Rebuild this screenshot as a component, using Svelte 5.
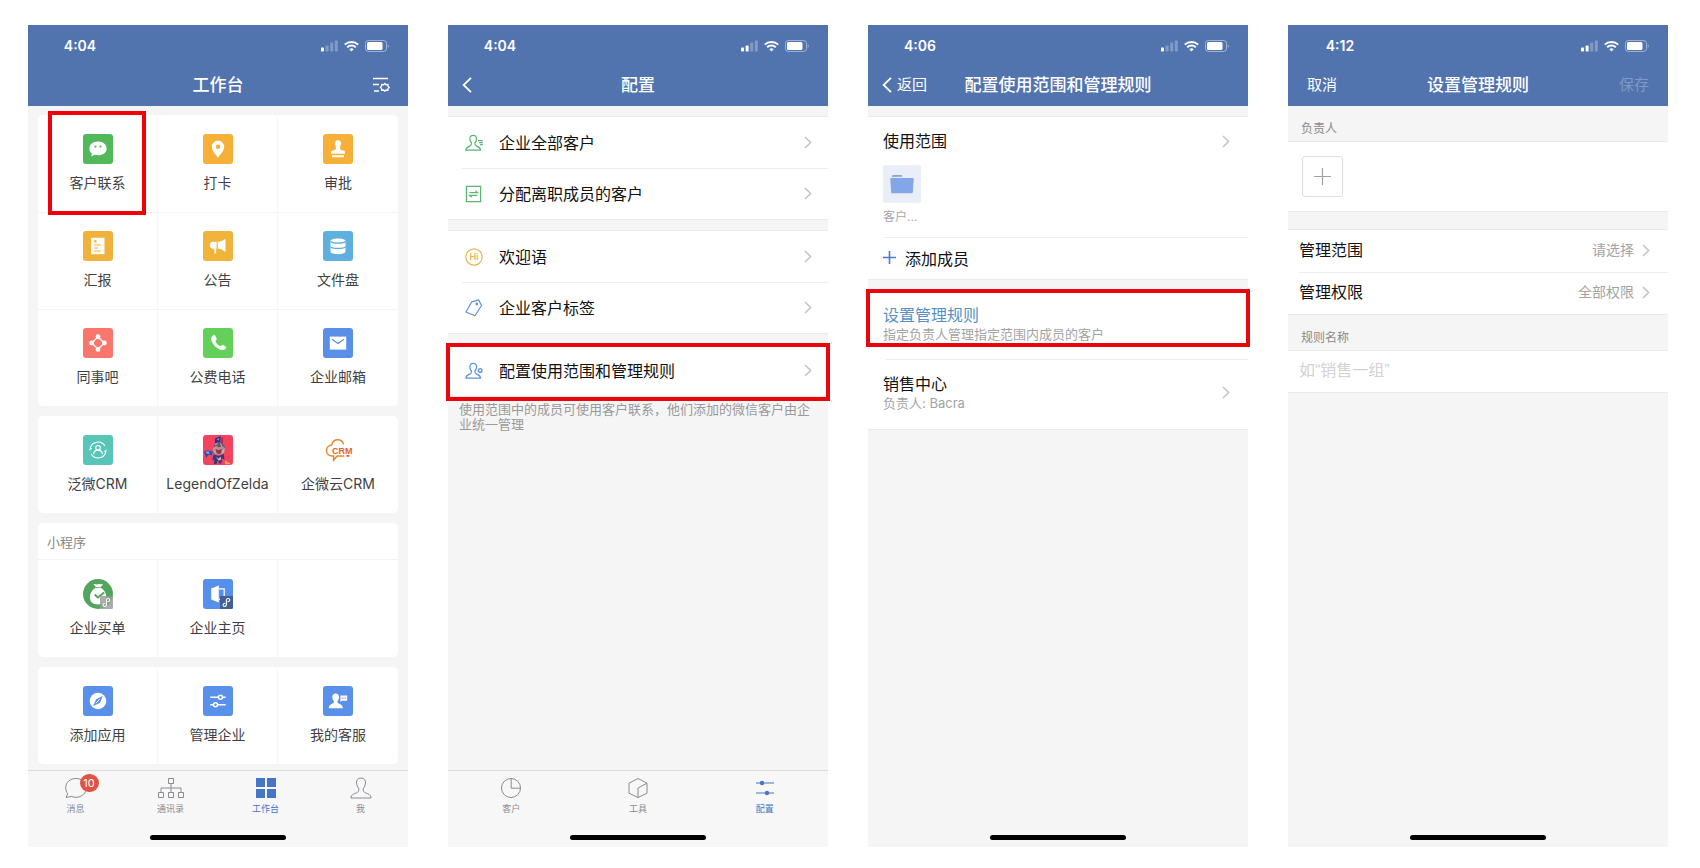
<script lang="ts">
  type App = { icon: string, label: string, marked?: boolean }
  type AppGroup = { title?: string, apps: App[] }
  type Tab = { icon: string, label: string, badge?: number }

  const appGroups: AppGroup[] = [
    {
      apps: [
        { icon: 'contact', label: '客户联系', marked: true },
        { icon: 'pin', label: '打卡' },
        { icon: 'stamp', label: '审批' },
        { icon: 'report', label: '汇报' },
        { icon: 'notice', label: '公告' },
        { icon: 'disk', label: '文件盘' },
        { icon: 'forum', label: '同事吧' },
        { icon: 'phone', label: '公费电话' },
        { icon: 'mail', label: '企业邮箱' }
      ]
    },
    {
      apps: [
        { icon: 'weaver', label: '泛微CRM' },
        { icon: 'zelda', label: 'LegendOfZelda' },
        { icon: 'cloudcrm', label: '企微云CRM' }
      ]
    },
    {
      title: '小程序',
      apps: [
        { icon: 'pay', label: '企业买单' },
        { icon: 'home', label: '企业主页' }
      ]
    },
    {
      apps: [
        { icon: 'compass', label: '添加应用' },
        { icon: 'manage', label: '管理企业' },
        { icon: 'service', label: '我的客服' }
      ]
    }
  ]

  const configGroups: App[][] = [
    [
      { icon: 'all', label: '企业全部客户' },
      { icon: 'assign', label: '分配离职成员的客户' }
    ],
    [
      { icon: 'hi', label: '欢迎语' },
      { icon: 'tag', label: '企业客户标签' }
    ],
    [{ icon: 'scope', label: '配置使用范围和管理规则', marked: true }]
  ]

  const mainTabs: Tab[] = [
    { icon: 'chat', label: '消息', badge: 10 },
    { icon: 'tree', label: '通讯录' },
    { icon: 'grid', label: '工作台' },
    { icon: 'me', label: '我' }
  ]

  const contactTabs: Tab[] = [
    { icon: 'pie', label: '客户' },
    { icon: 'cube', label: '工具' },
    { icon: 'sliders', label: '配置' }
  ]

  let mainTab = $state('工作台')
  let contactTab = $state('配置')
  let ruleName = $state('')
</script>

{#snippet statusBar(time: string, bars: number)}
  <div class="status-bar">
    <time>{time}</time>
    <span class="signals">
      <svg width="17" height="12" viewBox="0 0 17 12" fill="#fff" aria-hidden="true">
        {#each [4, 6, 9, 11] as h, i}
          <rect x={i * 4.6} y={11.5 - h} width="3" height={h} rx="0.8" opacity={i < bars ? 1 : 0.28} />
        {/each}
      </svg>
      <svg width="15" height="12" viewBox="0 0 15 12" fill="none" stroke="#fff" stroke-width="2" aria-hidden="true">
        <path d="M.8 4.6a9.6 9.6 0 0 1 13.4 0M3.2 7.2a6.2 6.2 0 0 1 8.6 0" />
        <path d="M7.5 11.4 5.4 9.3a3 3 0 0 1 4.2 0z" fill="#fff" stroke="none" />
      </svg>
      <svg width="24" height="12" viewBox="0 0 24 12" aria-hidden="true">
        <rect x=".5" y=".5" width="21" height="11" rx="3" fill="none" stroke="#fff" stroke-opacity=".45" />
        <rect x="2" y="2" width="15.5" height="8" rx="1.6" fill="#fff" />
        <path d="M22.8 4.2c1.2.4 1.2 3.2 0 3.6z" fill="#fff" fill-opacity=".5" />
      </svg>
    </span>
  </div>
{/snippet}

{#snippet chevron()}
  <svg class="chevron" width="8" height="13" viewBox="0 0 8 13" fill="none" stroke="#c4c4c8" stroke-width="1.6" aria-hidden="true">
    <path d="M1 1l5.6 5.5L1 12" />
  </svg>
{/snippet}

{#snippet backArrow()}
  <svg width="10" height="16" viewBox="0 0 10 16" fill="none" stroke="#fff" stroke-width="1.8" aria-hidden="true">
    <path d="M9 .8 1.6 8 9 15.2" />
  </svg>
{/snippet}

{#snippet tile(color: string)}
  <rect width="30" height="30" rx="3" fill={color} />
{/snippet}

{#snippet miniMark()}
  <path d="M24.8 22.7c1.3-.2 2-.9 2-1.7 0-.9-.8-1.5-1.700-1.500-1 0-1.700.7-1.700 1.700v4.500c0 1-.8 1.700-1.800 1.700-.9 0-1.600-.6-1.600-1.500 0-.8.7-1.500 1.900-1.700" fill="none" stroke="#fff" stroke-width="1.1" stroke-linecap="round" />
{/snippet}

{#snippet appIcon(name: string)}
  <svg width="30" height="30" viewBox="0 0 30 30" aria-hidden="true">
    {#if name === 'contact'}
      {@render tile('#52b95b')}
      <path d="M15 7.6c4.9 0 8.6 2.900 8.600 6.800s-3.700 6.900-8.600 6.900c-1.200 0-2.400-.2-3.400-.5L8.200 22.400l.7-2.900c-1.600-1.300-2.500-3-2.500-5.100 0-3.900 3.700-6.800 8.600-6.800z" fill="#fff" />
      <circle cx="12.5" cy="12.6" r="1.1" fill="#52b95b" />
      <circle cx="17.5" cy="12.6" r="1.1" fill="#52b95b" />
    {:else if name === 'pin'}
      {@render tile('#f6b037')}
      <path d="M15 6.6a6.2 6.2 0 0 1 6.2 6.2c0 4.200-4.200 8-6.200 11-2-3-6.200-6.800-6.200-11A6.2 6.2 0 0 1 15 6.6z" fill="#fff" />
      <circle cx="15" cy="12.8" r="2.2" fill="#f6b037" />
    {:else if name === 'stamp'}
      {@render tile('#f6b037')}
      <path d="M15 6.2c2.200 0 3.300 1.700 3.100 3.400-.2 1.600-1.200 2.600-1 4.600.1 1.400 1.200 2 3.200 2.200 1.200.1 1.700.7 1.700 1.900v1.400H8v-1.400c0-1.200.5-1.800 1.700-1.900 2-.2 3.100-.8 3.200-2.200.2-2-.8-3-1-4.600-.2-1.700.9-3.400 3.100-3.400zM9 21.300h12v1.900H9z" fill="#fff" />
    {:else if name === 'report'}
      {@render tile('#f1b23b')}
      <path d="M8 6.8h13.500v16.400H8z" fill="#fff" />
      <circle cx="12.3" cy="10.3" r="1.3" fill="#f1b23b" />
      <path d="M11 14h7M11 17h4M11 20h7" stroke="#f1b23b" stroke-width="1.1" />
    {:else if name === 'notice'}
      {@render tile('#f0b43c')}
      <path d="M13.600 10.800v7h-.5v4.800h-1.800v-4.800h-1c-2 0-3.500-1.400-3.500-3.500s1.500-3.500 3.500-3.500zM14.800 10.800h1.500c2.400-.4 4.400-1.700 6.200-3.300v13.600c-1.800-1.600-3.800-2.900-6.200-3.300h-1.500z" fill="#fff" />
    {:else if name === 'disk'}
      {@render tile('#5fb0df')}
      <path d="M7.5 10.2C7.5 6.7 22.5 6.7 22.5 10.2v10.4c0 3.500-15 3.500-15 0z" fill="#fff" />
      <path d="M7.5 10.4c1.200 2.300 13.800 2.300 15 0M7.5 15.7c1.200 2.300 13.800 2.300 15 0" fill="none" stroke="#5fb0df" stroke-width="1.2" />
    {:else if name === 'forum'}
      {@render tile('#f8766c')}
      <path d="M15 8.8 21.2 15 15 21.2 8.8 15z" fill="none" stroke="#fff" stroke-width="1.3" />
      <circle cx="15" cy="8.6" r="2.4" fill="#fff" />
      <circle cx="21.4" cy="15" r="2.4" fill="#fff" />
      <circle cx="15" cy="21.4" r="2.4" fill="#fff" />
      <circle cx="8.6" cy="15" r="2.4" fill="#fff" />
    {:else if name === 'phone'}
      {@render tile('#63d159')}
      <path d="M10.600 7.200c.8-.4 1.500 0 2 1l.9 2c.4.9.2 1.500-.5 2.100-.6.500-.6 1-.2 1.800.9 1.700 2 2.800 3.700 3.700.8.500 1.300.4 1.900-.2.600-.7 1.200-.8 2-.4l1.900 1.100c.9.500 1.100 1.200.6 1.900-1.300 1.900-3.600 2.400-6.100 1.300-4-1.800-6.900-4.700-8.300-8.400-.9-2.400-.2-4.900 2.100-5.900z" fill="#fff" />
    {:else if name === 'mail'}
      {@render tile('#5a8fe8')}
      <path d="M6.8 8.600h16.400v13H6.800z" fill="#fff" />
      <path d="M9 11.200l6 4.300 6-4.300" fill="none" stroke="#5a8fe8" stroke-width="1.2" />
    {:else if name === 'weaver'}
      {@render tile('#57c6b9')}
      <g fill="none" stroke="#fff" stroke-width="1.1">
        <path d="M7.200 13.200a8 8 0 0 1 14.600-2.300M22.800 16.800a8 8 0 0 1-14.600 2.300M7 15.400l.2-2.200 1.800.6M23 14.600l-.2 2.200-1.800-.6" />
        <circle cx="15" cy="12.8" r="2.3" />
        <path d="M10.600 19.300c.2-2.800 2-4.200 4.400-4.200s4.200 1.400 4.400 4.200" />
      </g>
    {:else if name === 'zelda'}
      {@render tile('#f5425f')}
      <path d="M12 3.500 17.800 1l-.6 6.500-5.200.9z" fill="#28308c" />
      <path d="M18 2.500l2.200.5-.4 6-2.600-1z" fill="#b52c58" />
      <path d="M1 16.500l4-1.200 5.500 1.700-1 3.300-4.200-.5-2 3.200z" fill="#3545a4" />
      <path d="M2.500 16.800l3-.7 1.500 2.400-3 .4z" fill="#61a9dc" />
      <circle cx="16" cy="13.8" r="6.2" fill="#b3958f" />
      <path d="M10 13l1.500-4 3-2 4.500.6 2.700 3.400.3 2.500-2.800-2.700-3.200 1.700-3-1.700z" fill="#6c527b" />
      <path d="M12 9.500l2.500-.8M17 8.700l2.200 1.800M10.700 15.500l1.800 2.200M20.800 15l-1.300 2.800" stroke="#dcc5ae" />
      <path d="M12.700 14l3 1.300 3-1.500-.6 4.200-2.300 1.600-2.500-2z" fill="#98305a" />
      <path d="M10.500 19.500l5.200 1.600 5-2 .8 5.500-2.500-1-.5 5h-2.500l-.8-4-1.700 4.400h-2.600l.4-4.500-2 1z" fill="#343785" />
      <path d="M13 22l2.600 1.600 2-2.200.7 3.400-2.700.7z" fill="#d6b29a" />
      <path d="M13.400 4.500l3-1.800-.5 3zM8.500 17l2 1.800-.7 1.200z" fill="#53a4dc" />
      <path d="M21.600 26.600l2-1.200 1 2.300h2.400v1.600h-4.600z" fill="#e7a95d" />
    {:else if name === 'cloudcrm'}
      <path d="M20.700 9.200c-1.100-2.800-3.300-4.500-5.900-4.500-3.200 0-5.500 2.200-6 5.200-3.100.3-5.300 2.600-5.300 5.500 0 3.200 2.400 5.500 5.800 5.500h1.300v4.200l3.600-4.200h7" fill="none" stroke="#e8892c" stroke-width="1.5" />
      <path d="M23.400 20.900h3" stroke="#d84d25" stroke-width="1.6" />
      <text x="9" y="19" class="crm">CRM</text>
    {:else if name === 'pay'}
      <circle cx="15" cy="15" r="15" fill="#52a55d" />
      <path d="M10.500 5.200c1.600-.6 2.700.5 4.300.1 1.800-.5 3.300-.5 5.400.2l-2.600 2.500h-4.700zM12.500 8.800h5.300c3.300 2 5.500 5.300 5.500 9.300 0 5-3 7.400-8.200 7.400s-8.200-2.400-8.200-7.400c0-4 2.300-7.300 5.600-9.300z" fill="#fff" />
      <path d="M11.700 15.500l3.200 3 6.300-5" fill="none" stroke="#52a55d" stroke-width="1.9" />
      <rect x="17" y="17" width="13" height="13" rx="1.5" fill="#979c98" fill-opacity=".8" />
      {@render miniMark()}
    {:else if name === 'home'}
      {@render tile('#5490ec')}
      <path d="M8.200 9.600 15.800 6.600v17l-7.600-3z" fill="#fff" />
      <path d="M16 9.800h5.200v10.500H16" fill="none" stroke="#fff" stroke-width="1.2" />
      <path d="M17 17h13v11.500a1.500 1.500 0 0 1-1.500 1.500H17z" fill="#3f6197" />
      {@render miniMark()}
    {:else if name === 'compass'}
      {@render tile('#5990e9')}
      <circle cx="15" cy="15" r="8.3" fill="#fff" />
      <path d="M19.800 10l-2.900 6.900-6.700 3.200 2.900-6.900z" fill="#5990e9" />
      <path d="M13 17.200l3.700-4" stroke="#fff" stroke-width="1" />
    {:else if name === 'manage'}
      {@render tile('#5990e9')}
      <g fill="none" stroke="#fff" stroke-width="1.5">
        <path d="M7.300 11.300h8.200M19.500 11.300h3.200M7.300 18.700h3.200M14.500 18.700h8.200" />
        <circle cx="17.5" cy="11.3" r="2" />
        <circle cx="12.5" cy="18.7" r="2" />
      </g>
    {:else if name === 'service'}
      {@render tile('#5990e9')}
      <path d="M12.700 7.500c2.400 0 3.500 1.800 3.300 4-.1 1.600-.7 2.700-1.400 3.500v1.700c1.400 1.200 5.200 1.500 5.200 5.500H5.800c0-4 3.700-4.300 5-5.500V15c-.8-.8-1.400-1.900-1.500-3.500-.1-2.200 1-4 3.400-4z" fill="#fff" />
      <path d="M17.400 9.500h6.800v5.300h-4.800l-2 1z" fill="#fff" />
      <path d="M18.800 12.100h4.200" stroke="#5990e9" stroke-width="1" stroke-dasharray="1 .6" />
    {/if}
  </svg>
{/snippet}

{#snippet rowIcon(name: string)}
  <svg width="18" height="18" viewBox="0 0 18 18" fill="none" stroke-width="1.2" aria-hidden="true">
    {#if name === 'all' || name === 'scope'}
      <g stroke={name === 'all' ? '#5cb472' : '#5f93dc'}>
        <path d="M8.200 1.300c2.400 0 3.500 1.600 3.300 3.800-.1 1.900-.8 3-1.700 4 0 1.600.2 2.200 1.500 2.800 2.100 1 4.200 1.300 4.200 4.200H.9c0-2.900 2.100-3.200 4.200-4.200 1.300-.6 1.500-1.200 1.500-2.800-.9-1-1.600-2.100-1.700-4-.2-2.200.9-3.800 3.300-3.800z" />
        {#if name === 'all'}
          <path d="M13 6.600h4.800M14 8.600h3.800M15 10.600h2.800" />
        {:else}
          <circle cx="15.2" cy="8.4" r="1.800" stroke-width="1.4" />
        {/if}
      </g>
    {:else if name === 'assign'}
      <g stroke="#5cb472">
        <path d="M1.400 1.400h14.200v15.200H1.400z" />
        <path d="M4.500 7.600h8l-2.200-2M12.500 10.300h-8l2.200 2" />
      </g>
    {:else if name === 'hi'}
      <circle cx="9" cy="9" r="8.2" stroke="#e2b751" />
      <text x="9" y="12.2" text-anchor="middle" class="hi">Hi</text>
    {:else if name === 'tag'}
      <g stroke="#5f93dc">
        <path d="M6.800 2.800 13.600.9l2.900 5.600L10 16.700.9 13z" stroke-linejoin="round" />
        <circle cx="11.8" cy="5" r=".8" fill="#5f93dc" />
      </g>
    {/if}
  </svg>
{/snippet}

{#snippet tabIcon(name: string)}
  <svg width="26" height="24" viewBox="0 0 26 24" fill="none" stroke="currentColor" aria-hidden="true">
    {#if name === 'chat'}
      <path d="M13 2.500c5.800 0 10.300 3.700 10.300 9.200s-4.500 9.600-10.300 9.600c-1.800 0-3.300-.4-4.700-1l-5.200 1.300 1.600-3.800c-1.300-1.700-2-3.700-2-6.100C2.700 6.200 7.200 2.500 13 2.500z" />
    {:else if name === 'tree'}
      <path d="M10.500 2.500h5v5h-5zM.5 16.500h5v5h-5zM10.500 16.500h5v5h-5zM20.500 16.500h5v5h-5zM13 7.500v9M3 16.500v-4.500h20v4.500" />
    {:else if name === 'grid'}
      <path d="M3 2h9v9H3zM14 2h9v9h-9zM3 13h9v9H3zM14 13h9v9h-9z" fill="currentColor" stroke="none" />
    {:else if name === 'me'}
      <path d="M13 2c3.300 0 4.700 2.100 4.500 5-.2 2.300-1 4-2.200 5.200v2.500c0 1 .8 1.500 2.200 2.100 2.700 1.200 5.600 1.800 5.600 5.200H2.900c0-3.400 2.900-4 5.600-5.200 1.400-.6 2.200-1.100 2.200-2.100v-2.500C9.500 11 8.700 9.300 8.500 7 8.300 4.100 9.700 2 13 2z" />
    {:else if name === 'pie'}
      <circle cx="13" cy="12" r="9.5" />
      <path d="M13.200 2.500v9.700h9.300" />
    {:else if name === 'cube'}
      <path d="M13 2.500l9 4.700v10L13 21.500l-9-4.300v-10zM13 21.500V12l9-4.800" stroke-linejoin="round" />
    {:else if name === 'sliders'}
      <path d="M4 7h18M4 17h18" stroke-width="1.2" />
      <circle cx="10" cy="7" r="2.2" fill="currentColor" stroke="none" />
      <circle cx="15" cy="17" r="2.2" fill="currentColor" stroke="none" />
    {/if}
  </svg>
{/snippet}

{#snippet tabBar(tabs: Tab[], active: string, select: (label: string) => void)}
  <footer class="tab-bar">
    <nav class="tabs">
      {#each tabs as tab}
        <button type="button" class="tab" class:active={tab.label === active} onclick={() => select(tab.label)}>
          <span class="tab-icon">
            {@render tabIcon(tab.icon)}
            {#if tab.badge}
              <span class="badge">{tab.badge}</span>
            {/if}
          </span>
          {tab.label}
        </button>
      {/each}
    </nav>
    <div class="home-indicator"></div>
  </footer>
{/snippet}

<main class="board">
  <section class="phone" aria-label="工作台">
    <header class="top">
      {@render statusBar('4:04', 1)}
      <div class="nav-bar">
        <span></span>
        <h2>工作台</h2>
        <button type="button" class="nav-button end" aria-label="设置">
          <svg width="18" height="16" viewBox="0 0 18 16" fill="none" stroke="#fff" stroke-width="1.5" aria-hidden="true">
            <path d="M1 1.500h15M1 7.500h6M2 14h5" />
            <path d="M12.800 6.400l1.200 1.300 1.900-.2.200 1.700 1.100 1.100-1.100 1.200-.2 1.700-1.900-.2-1.200 1.200-1.200-1.200-1.900.2-.2-1.700-1.100-1.200 1.100-1.100.2-1.700 1.900.2z" stroke-width="1.300" />
          </svg>
        </button>
      </div>
    </header>
    <div class="app-groups">
      {#each appGroups as group}
        <div class="card">
          {#if group.title}
            <h3>{group.title}</h3>
          {/if}
          <div class="app-grid">
            {#each group.apps as app}
              <button type="button" class="app" class:marked={app.marked}>
                {@render appIcon(app.icon)}
                <span>{app.label}</span>
              </button>
            {/each}
          </div>
        </div>
      {/each}
    </div>
    {@render tabBar(mainTabs, mainTab, (label) => (mainTab = label))}
  </section>

  <section class="phone" aria-label="配置">
    <header class="top">
      {@render statusBar('4:04', 2)}
      <div class="nav-bar">
        <button type="button" class="nav-button back" aria-label="返回">{@render backArrow()}</button>
        <h2>配置</h2>
      </div>
    </header>
    {#each configGroups as rows}
      <div class="group spaced">
        {#each rows as row}
          <button type="button" class="config-row" class:marked={row.marked}>
            {@render rowIcon(row.icon)}
            <span class="grow">{row.label}</span>
            {@render chevron()}
          </button>
        {/each}
      </div>
    {/each}
    <p class="hint">使用范围中的成员可使用客户联系，他们添加的微信客户由企业统一管理</p>
    {@render tabBar(contactTabs, contactTab, (label) => (contactTab = label))}
  </section>

  <section class="phone" aria-label="配置使用范围和管理规则">
    <header class="top">
      {@render statusBar('4:06', 1)}
      <div class="nav-bar">
        <button type="button" class="nav-button back">{@render backArrow()}返回</button>
        <h2>配置使用范围和管理规则</h2>
      </div>
    </header>
    <div class="group spaced">
      <div class="scope">
        <button type="button" class="scope-head">
          <span class="grow">使用范围</span>
          {@render chevron()}
        </button>
        <div class="member">
          <span class="folder">
            <svg width="24" height="20" viewBox="0 0 24 20" aria-hidden="true">
              <path d="M1.800 2.800c0-1 .5-1.600 1.500-1.600H11c.8 0 1.300.4 1.500 1.200z" fill="#6b8fcb" />
              <path d="M1.300 4h21.400c.8 0 1.100.5 1 1.200l-.9 13c-.1.700-.5 1.100-1.200 1.100H2.400c-.7 0-1.100-.4-1.200-1.100L.3 5.200C.2 4.500.5 4 1.300 4z" fill="#82a6e8" />
            </svg>
          </span>
          <span class="member-name">客户...</span>
        </div>
      </div>
      <button type="button" class="add-row">
        <svg width="13" height="13" viewBox="0 0 13 13" stroke="#4a7ccb" stroke-width="1.6" aria-hidden="true">
          <path d="M6.500 0v13M0 6.500h13" />
        </svg>
        添加成员
      </button>
    </div>
    <div class="group spaced">
      <button type="button" class="rule-row marked">
        <span class="grow">
          <span class="rule-title accent">设置管理规则</span>
          <span class="rule-sub">指定负责人管理指定范围内成员的客户</span>
        </span>
      </button>
      <button type="button" class="rule-row">
        <span class="grow">
          <span class="rule-title">销售中心</span>
          <span class="rule-sub">负责人: Bacra</span>
        </span>
        {@render chevron()}
      </button>
    </div>
    <div class="home-indicator"></div>
  </section>

  <section class="phone" aria-label="设置管理规则">
    <header class="top">
      {@render statusBar('4:12', 2)}
      <div class="nav-bar">
        <button type="button" class="nav-button text">取消</button>
        <h2>设置管理规则</h2>
        <button type="button" class="nav-button text end" disabled>保存</button>
      </div>
    </header>
    <div class="field-label">负责人</div>
    <div class="group owner">
      <button type="button" class="add-owner" aria-label="添加负责人">
        <svg width="17" height="17" viewBox="0 0 17 17" stroke="#a3a3a3" stroke-width="1.2" aria-hidden="true">
          <path d="M8.500 0v17M0 8.500h17" />
        </svg>
      </button>
    </div>
    <div class="group options">
      <button type="button" class="option-row">
        <span class="grow">管理范围</span>
        <span class="value">请选择</span>
        {@render chevron()}
      </button>
      <button type="button" class="option-row">
        <span class="grow">管理权限</span>
        <span class="value">全部权限</span>
        {@render chevron()}
      </button>
    </div>
    <label class="field-label" for="rule-name">规则名称</label>
    <div class="group">
      <input id="rule-name" type="text" placeholder="如“销售一组”" bind:value={ruleName} />
    </div>
    <div class="home-indicator"></div>
  </section>
</main>

<style>
  :global(body) {
    background: #fff;
  }

  .board {
    display: grid;
    grid-template-columns: repeat(4, minmax(0, 1fr));
    gap: 40px;
    box-sizing: border-box;
    min-height: 100vh;
    padding: 25px 32px 21px 28px;
    font-family: Inter, "Noto Sans CJK SC", sans-serif;
    color: #111;
  }

  button,
  input {
    margin: 0;
    padding: 0;
    border: 0;
    background: none;
    color: inherit;
    font: inherit;
    text-align: left;
  }

  button {
    cursor: pointer;
  }

  svg {
    display: block;
    flex: none;
  }

  .phone {
    display: flex;
    flex-direction: column;
    background: #f5f5f5;
  }

  .top {
    background: #5274ae;
    color: #fff;
  }

  .status-bar {
    display: flex;
    align-items: center;
    justify-content: space-between;
    box-sizing: border-box;
    height: 41px;
    padding: 0 19px 0 32px;
    font-size: 14px;
    font-weight: 600;
  }

  .status-bar time {
    min-width: 40px;
    text-align: center;
  }

  .signals {
    display: flex;
    align-items: center;
    gap: 6px;
  }

  .nav-bar {
    display: grid;
    grid-template-columns: 1fr auto 1fr;
    align-items: center;
    box-sizing: border-box;
    height: 40px;
    padding: 0 14px 2px;
  }

  h2 {
    margin: 0;
    font-size: 17px;
    font-weight: 500;
    line-height: 24px;
  }

  .nav-button {
    display: flex;
    align-items: center;
    gap: 5px;
    font-size: 15px;
    line-height: 24px;
  }

  .nav-button.text {
    padding: 0 5px;
  }

  .end {
    justify-self: end;
    margin-right: 4px;
  }

  .nav-button.text.end {
    margin-right: 0;
  }

  .nav-button:disabled {
    color: #7f99c6;
  }

  .grow {
    flex: 1;
  }

  /* workbench */
  .app-groups {
    display: flex;
    flex-direction: column;
    gap: 10px;
    padding: 9px 10px 6px;
  }

  .card {
    border-radius: 5px;
    background: #fff;
  }

  h3 {
    box-sizing: border-box;
    height: 37px;
    margin: 0;
    padding: 9px 9px 0;
    border-bottom: 1px solid #f3f3f3;
    color: #888;
    font-size: 13px;
    font-weight: 400;
    line-height: 20px;
  }

  .app-grid {
    display: grid;
    grid-template-columns: repeat(3, minmax(0, 1fr));
  }

  .app {
    position: relative;
    display: flex;
    flex-direction: column;
    align-items: center;
    gap: 9px;
    box-sizing: border-box;
    height: 97px;
    padding-top: 19px;
    color: #3f3f44;
    font-size: 14px;
    line-height: 20px;
  }

  .app:not(:nth-child(3n)) {
    border-right: 1px solid #f6f6f6;
  }

  .app:nth-child(n + 4) {
    padding-top: 18px;
    border-top: 1px solid #f3f3f3;
  }

  .marked {
    position: relative;
    z-index: 1;
  }

  .marked::after {
    content: '';
    position: absolute;
    border: 4px solid #e9060c;
    pointer-events: none;
  }

  .app.marked::after {
    inset: -4px 11px -3px 10px;
    border-color: #f2000a;
  }

  .crm {
    fill: #e0622a;
    font-family: "Liberation Sans", sans-serif;
    font-size: 9px;
    font-weight: 700;
  }

  .hi {
    fill: #e2b751;
    stroke: none;
    font-size: 9px;
    font-weight: 600;
  }

  /* bottom tabs */
  .tab-bar {
    margin-top: auto;
    border-top: 1px solid #dcdcdc;
    background: #f7f7f7;
  }

  .tabs {
    display: flex;
    padding: 5px 0 19px;
  }

  .tab {
    display: flex;
    flex: 1;
    flex-direction: column;
    align-items: center;
    gap: 2px;
    color: #8b8b92;
    font-size: 9px;
    line-height: 14px;
  }

  .tab.active {
    color: #4675c6;
  }

  .tab-icon {
    position: relative;
  }

  .badge {
    position: absolute;
    top: -2px;
    left: 17px;
    min-width: 19px;
    border-radius: 9px;
    background: #de5346;
    color: #fff;
    font-size: 11px;
    line-height: 18px;
    text-align: center;
  }

  .home-indicator {
    width: 136px;
    height: 5px;
    margin: auto auto 7px;
    border-radius: 3px;
    background: #000;
  }

  /* list groups */
  .group {
    border-top: 1px solid #e9e9e9;
    border-bottom: 1px solid #e9e9e9;
    background: #fff;
  }

  .spaced {
    margin-top: 10px;
  }

  .config-row,
  .option-row {
    display: flex;
    align-items: center;
    box-sizing: border-box;
    width: 100%;
    background: linear-gradient(#eee, #eee) 14px 0 / 100% 1px no-repeat;
    font-size: 16px;
    line-height: 24px;
  }

  .config-row {
    gap: 16px;
    height: 51px;
    padding: 0 16px 0 17px;
  }

  .config-row:first-child,
  .option-row:first-child {
    background: none;
  }

  .config-row.marked::after {
    inset: -2px -2px -5px;
  }

  .hint {
    margin: 0;
    padding: 5px 11px;
    color: #999;
    font-size: 13px;
    line-height: 15px;
  }

  .scope {
    margin-left: 15px;
    padding: 13px 0 11px;
    border-bottom: 1px solid #eee;
  }

  .scope-head {
    display: flex;
    align-items: center;
    box-sizing: border-box;
    width: 100%;
    padding-right: 18px;
    font-size: 16px;
    line-height: 22px;
  }

  .member {
    display: flex;
    flex-direction: column;
    gap: 5px;
    width: 38px;
    margin-top: 13px;
  }

  .folder {
    display: grid;
    place-items: center;
    height: 38px;
    border-radius: 2px;
    background: #e9eef8;
  }

  .member-name {
    color: #a6a6a6;
    font-size: 12px;
    line-height: 18px;
    white-space: nowrap;
  }

  .add-row {
    display: flex;
    align-items: center;
    gap: 9px;
    box-sizing: border-box;
    width: 100%;
    height: 41px;
    padding: 0 15px 2px;
    font-size: 16px;
  }

  .rule-row {
    display: flex;
    align-items: center;
    box-sizing: border-box;
    width: 100%;
    padding: 13px 18px 16px 15px;
  }

  .rule-row + .rule-row {
    padding-top: 14px;
    padding-bottom: 17px;
    background: linear-gradient(#eee, #eee) 18px 0 / 100% 1px no-repeat;
  }

  .rule-row.marked::after {
    inset: -2px -2px 12px;
  }

  .rule-title,
  .rule-sub {
    display: block;
  }

  .rule-title {
    font-size: 16px;
    line-height: 22px;
  }

  .accent {
    color: #5590c6;
  }

  .rule-sub {
    color: #a3a3a3;
    font-size: 13px;
    line-height: 17px;
  }

  /* rule form */
  .field-label {
    padding: 14px 13px 3px;
    color: #8a8a8a;
    font-size: 12px;
    line-height: 18px;
  }

  .owner {
    padding: 14px;
  }

  .add-owner {
    display: grid;
    place-items: center;
    box-sizing: border-box;
    width: 41px;
    height: 41px;
    border: 1px solid #dedede;
    border-radius: 3px;
  }

  .options {
    margin-top: 17px;
  }

  .option-row {
    gap: 8px;
    height: 42px;
    padding: 0 18px 2px 11px;
    background-position: 11px 0;
  }

  .value {
    color: #a3a3a3;
    font-size: 14px;
  }

  input {
    display: block;
    box-sizing: border-box;
    width: 100%;
    height: 41px;
    padding: 0 11px 2px;
    font-family: "Liberation Sans", "Noto Sans CJK SC", sans-serif;
    font-size: 16px;
  }

  input::placeholder {
    color: #d2d2d2;
    opacity: 1;
  }
</style>
